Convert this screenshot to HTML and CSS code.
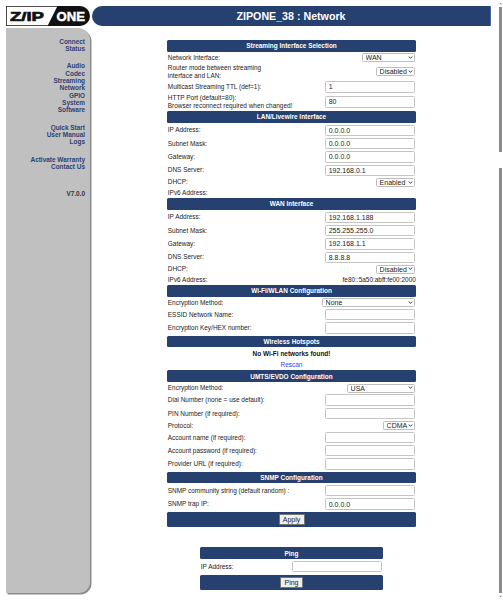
FILE: index.html
```html
<!DOCTYPE html>
<html lang="en">
<head>
<meta charset="utf-8">
<title>ZIPONE_38 : Network</title>
<link rel="stylesheet" href="styles.css">
</head>
<body>
<div class="page">
  <div class="content">
    <header class="top">
      <svg class="logo" viewBox="0 0 84 20" aria-label="Z/IP ONE">
        <rect x="0.4" y="0.4" width="55" height="19.2" fill="#fff" stroke="#222" stroke-width="0.8"/>
        <path d="M41.5 20 L51.5 0 H74 A10 10 0 0 1 74 20 Z" fill="#111"/>
        <text class="logo-a" x="4" y="15.4" textLength="34" lengthAdjust="spacingAndGlyphs">Z/IP</text>
        <text class="logo-b" x="50.6" y="15.2" textLength="28.5" lengthAdjust="spacingAndGlyphs">ONE</text>
      </svg>
      <h1 class="title">ZIPONE_38 : Network</h1>
    </header>
    <div class="body">
      <nav class="side">
        <div class="group"><a href="#">Connect</a><a href="#">Status</a></div>
        <div class="group"><a href="#">Audio</a><a href="#">Codec</a><a href="#">Streaming</a><a href="#">Network</a><a href="#">GPIO</a><a href="#">System</a><a href="#">Software</a></div>
        <div class="group"><a href="#">Quick Start</a><a href="#">User Manual</a><a href="#">Logs</a></div>
        <div class="group"><a href="#">Activate Warranty</a><a href="#">Contact Us</a></div>
        <div class="version">V7.0.0</div>
      </nav>
      <main class="main">
        <form class="panel wide">
          <div class="head">Streaming Interface Selection</div>
          <div class="row sel"><span>Network Interface:</span><select class="s-wan"><option>WAN</option></select></div>
          <div class="row two-a"><span>Router mode between streaming<br>interface and LAN:</span><select class="s-dis"><option>Disabled</option></select></div>
          <div class="row"><span>Multicast Streaming TTL (def=1):</span><input value="1"></div>
          <div class="row two-b"><span>HTTP Port (default=80):<br>Browser reconnect required when changed!</span><input value="80"></div>

          <div class="head">LAN/Livewire Interface</div>
          <div class="row"><span>IP Address:</span><input value="0.0.0.0"></div>
          <div class="row"><span>Subnet Mask:</span><input value="0.0.0.0"></div>
          <div class="row"><span>Gateway:</span><input value="0.0.0.0"></div>
          <div class="row"><span>DNS Server:</span><input value="192.168.0.1"></div>
          <div class="row sel"><span>DHCP:</span><select class="s-dis"><option>Enabled</option></select></div>
          <div class="row info"><span>IPv6 Address:</span></div>

          <div class="head">WAN Interface</div>
          <div class="row"><span>IP Address:</span><input value="192.168.1.188"></div>
          <div class="row"><span>Subnet Mask:</span><input value="255.255.255.0"></div>
          <div class="row"><span>Gateway:</span><input value="192.168.1.1"></div>
          <div class="row"><span>DNS Server:</span><input value="8.8.8.8"></div>
          <div class="row sel"><span>DHCP:</span><select class="s-dis"><option>Disabled</option></select></div>
          <div class="row info"><span>IPv6 Address:</span><span>fe80::5a50:abff:fe00:2000</span></div>

          <div class="head">Wi-Fi/WLAN Configuration</div>
          <div class="row sel"><span>Encryption Method:</span><select class="s-enc"><option>None</option></select></div>
          <div class="row"><span>ESSID Network Name:</span><input></div>
          <div class="row"><span>Encryption Key/HEX number:</span><input></div>

          <div class="head">Wireless Hotspots</div>
          <div class="note">No Wi-Fi networks found!</div>
          <div class="rescan"><a href="#">Rescan</a></div>

          <div class="head">UMTS/EVDO Configuration</div>
          <div class="row sel"><span>Encryption Method:</span><select class="s-usa"><option>USA</option></select></div>
          <div class="row"><span>Dial Number (none = use default):</span><input></div>
          <div class="row"><span>PIN Number (if required):</span><input></div>
          <div class="row sel"><span>Protocol:</span><select class="s-cdma"><option>CDMA</option></select></div>
          <div class="row"><span>Account name (if required):</span><input></div>
          <div class="row"><span>Account password (if required):</span><input></div>
          <div class="row"><span>Provider URL (if required):</span><input></div>

          <div class="head">SNMP Configuration</div>
          <div class="row"><span>SNMP community string (default random) :</span><input></div>
          <div class="row"><span>SNMP trap IP:</span><input value="0.0.0.0"></div>
          <div class="bar"><button type="button">Apply</button></div>
        </form>
        <form class="panel narrow">
          <div class="head">Ping</div>
          <div class="row"><span>IP Address:</span><input></div>
          <div class="bar"><button type="button" class="ping">Ping</button></div>
        </form>
      </main>
    </div>
  </div>
  <div class="scroll" aria-hidden="true">
    <svg class="arrow" viewBox="0 0 4 3"><path d="M2 0.5 L3.6 2.5 H0.4 Z"/></svg>
    <div class="thumb t1"></div>
    <div class="thumb t2"></div>
    <svg class="arrow" viewBox="0 0 4 3"><path d="M2 2.5 L3.6 0.5 H0.4 Z"/></svg>
  </div>
</div>
</body>
</html>
```
FILE: styles.css
```css
* { box-sizing: border-box; }
html, body { margin: 0; height: 100%; overflow: hidden; background: #fff; }
body { font-family: "Liberation Sans", Arial, sans-serif; font-size: 6.45px; color: #222; }
a { text-decoration: none; }

.page { display: flex; width: 503px; height: 600px; }
.content { width: 499px; padding: 6px 8px 0 6px; }

.top { display: flex; align-items: stretch; height: 20px; gap: 2px; }
.logo { width: 84px; height: 20px; flex: none; display: block; }
.logo-a { font: 900 13.5px "Liberation Sans", sans-serif; fill: #111; stroke: #111; stroke-width: 0.7px; }
.logo-b { font: 900 13px "Liberation Sans", sans-serif; fill: #fff; stroke: #fff; stroke-width: 0.45px; }
.title {
  flex: 1; margin: 0; display: flex; align-items: center; justify-content: center;
  background: #264070; color: #fff; font-size: 10.67px; font-weight: bold;
  border-radius: 10px 1px 1px 10px; border-right: 1px solid #4a6aa5;
}

.body { display: flex; margin-top: 2.3px; }
.side {
  flex: none; width: 84px; height: 565px; margin-right: 2px;
  padding: 9.3px 5px 0 0; background: #c0c0c0; border-radius: 0 12px 11px 0;
  box-shadow: 1.5px 1.5px 0 #8c8c8c; text-align: right; font-weight: bold; line-height: 7.33px;
}
.side a { display: block; color: #2b4276; }
.group { margin-bottom: 10px; }
.version { margin-top: 20px; color: #333; }

.main { flex: 1; display: flex; flex-direction: column; align-items: center; padding-top: 12px; }
.panel { display: flex; flex-direction: column; gap: 2px; }
.wide { width: 248.6px; }
.narrow { width: 182.6px; margin-top: 20.67px; }

.head {
  height: 11.33px; display: flex; align-items: center; justify-content: center;
  background: #264070; color: #fff; font-weight: bold; border-radius: 1.5px;
}
.row { display: flex; align-items: center; justify-content: space-between; height: 11.33px; padding-left: 0.6px; line-height: 7.6px; }
.row.sel { height: 8.67px; }
.row.two-a { height: 15px; }
.row.two-b { height: 14.67px; }
.row.info { height: 7.67px; }
.note { height: 9.33px; display: flex; align-items: center; justify-content: center; font-weight: bold; color: #111; }
.rescan { height: 8px; display: flex; align-items: center; justify-content: center; }
.rescan a { color: #3c3cff; }

input, select, button { font-family: "Liberation Sans", Arial, sans-serif; font-size: 7px; color: #222; }
input {
  flex: none; width: 90px; height: 11.33px; margin: 0 0.6px 0 0; padding: 0 2.5px;
  border: 0.7px solid #c4c4c4; border-radius: 1.5px; background: #fff; outline: none;
}
select {
  appearance: none; -webkit-appearance: none;
  flex: none; height: 9px; margin: 0 0.6px 0 0; padding: 0 0 0.8px 2.4px; line-height: 7px;
  border: 0.7px solid #bdbdbd; border-radius: 1.5px; outline: none;
  background: #fff url("data:image/svg+xml,%3Csvg xmlns='http://www.w3.org/2000/svg' viewBox='0 0 6 4'%3E%3Cpath d='M0.8 0.8 L3 3 L5.2 0.8' fill='none' stroke='%23222' stroke-width='1.1'/%3E%3C/svg%3E") no-repeat right 1px center / 5px 3.4px;
}
.s-wan { width: 53px; }
.s-dis { width: 39px; }
.s-enc { width: 93px; }
.s-usa { width: 68px; }
.s-cdma { width: 32px; }

.bar { height: 15px; display: flex; align-items: center; justify-content: center; background: #264070; border-radius: 1.5px; }
.bar button {
  width: 26px; height: 11px; padding: 0; background: #efefef; border: 0.7px solid #767676; border-radius: 1px;
}
.bar button.ping { width: 22.4px; }
.narrow .bar { margin-top: 1.33px; }

.scroll { width: 4px; height: 600px; display: flex; flex-direction: column; align-items: flex-start; padding-top: 2px; }
.arrow { width: 3.4px; height: 3px; flex: none; }
.arrow path { fill: #8a8a8a; }
.thumb { width: 3.4px; background: #8a8a8a; flex: none; }
.t1 { height: 145px; margin-top: 2px; }
.t2 { height: 425px; margin-top: 16px; margin-bottom: 2px; }
```
